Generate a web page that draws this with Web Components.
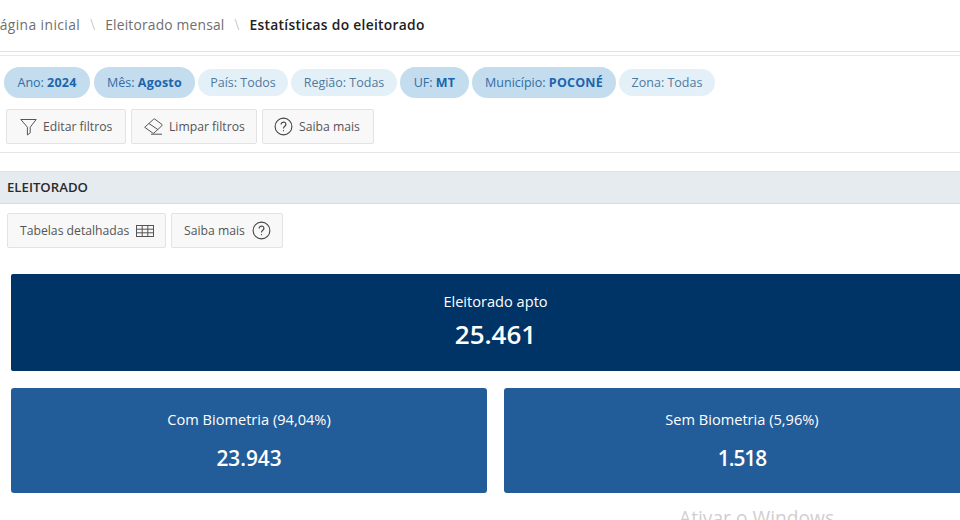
<!DOCTYPE html>
<html lang="pt-BR"><head><meta charset="utf-8"><title>Estatísticas do eleitorado</title>
<style>
html,body{margin:0;padding:0;background:#fff;overflow:hidden;width:960px;height:520px}
body{font-family:"Open Sans","Noto Sans",sans-serif}
app-page{width:1000px}
</style></head><body>
<template id="t-crumbs"><style>
:host{display:flex;align-items:center;height:51px;box-sizing:border-box;margin-left:-9px;padding-bottom:2px;font-size:13.8px;letter-spacing:.2px;color:#6f6f6f;white-space:nowrap}
.f{letter-spacing:.42px}
.s{margin:0 10px 0 10px;color:#b4b4b4;font-size:14px;font-weight:300}
b{font-weight:600;color:#212121;letter-spacing:.3px}
</style><span class="f">Página inicial</span><span class="s">\</span><span>Eleitorado mensal</span><span class="s">\</span><b>Estatísticas do eleitorado</b></template>

<template id="t-chip"><style>
:host{display:inline-flex;align-items:center;justify-content:center;height:27px;border-radius:14px;background:#e4f0f8;color:#4f7aa0;font-size:12.5px;white-space:nowrap;box-sizing:border-box;flex:none}
:host([on]){height:31px;border-radius:16px;background:#c3dcee;color:#2f6ea6}
::slotted(b){color:#1b66ad;font-weight:700;letter-spacing:.2px}
</style><slot></slot></template>

<template id="t-btn"><style>
:host{display:inline-flex;align-items:center;gap:var(--g,6px);height:35px;box-sizing:border-box;padding:0 var(--pr,13px) 0 var(--pl,13px);background:#f8f8f8;border:1px solid #e3e3e3;border-radius:2px;color:#555;font-size:12.2px;white-space:nowrap}
::slotted(svg){flex:none}
</style><slot></slot></template>

<template id="t-section"><style>
:host{display:flex;align-items:center;height:33px;box-sizing:border-box;padding:0 0 2px 7px;background:#e6ebf0;border-top:1px solid #dde2e7;border-bottom:1px solid #d6dbe0;color:#2a2a2a;font-size:13.2px;font-weight:600}
</style><slot></slot></template>

<template id="t-stat"><style>
:host{display:flex;flex-direction:column;align-items:center;box-sizing:border-box;border-radius:3px;background:#235d99;color:#fff;height:105px;padding-top:23px}
:host([dark]){background:#003366;height:97px;padding-top:19px;border-radius:2px}
.l{font-size:14.6px;line-height:16px}
.v{font-weight:600;font-size:20.8px;line-height:30px;margin-top:16px}
:host([dark]) .v{font-size:26px;line-height:34px;margin-top:8px}
</style><span class="l"><slot name="label"></slot></span><span class="v"><slot name="value"></slot></span></template>

<template id="t-page"><style>
:host{display:block}
.rule{border-top:1px solid #e2e2e2;border-bottom:1px solid #e8e8e8;height:3px}
.chips{display:flex;align-items:center;gap:3px;padding:11px 0 0 4px;height:31px}
.btns{display:flex;gap:5px;padding:11px 0 8px 6px;border-bottom:1px solid #e6e6e6}
.gap{height:18px}
.btns2{display:flex;gap:5px;padding:9px 0 0 7px}
.cards{display:flex;flex-direction:column;gap:17px;padding:26px 0 0 11px}
.row{display:grid;grid-template-columns:476px 476px;gap:17px}
</style>
<bread-crumbs></bread-crumbs><div class="rule"></div>
<div class="chips">
<filter-chip on style="width:86px;margin-right:1px">Ano:&nbsp;<b>2024</b></filter-chip><filter-chip on style="width:101px">Mês:&nbsp;<b>Agosto</b></filter-chip><filter-chip style="width:90px">País: Todos</filter-chip><filter-chip style="width:106px">Região: Todas</filter-chip><filter-chip on style="width:69px">UF:&nbsp;<b>MT</b></filter-chip><filter-chip on style="width:144px">Município:&nbsp;<b>POCONÉ</b></filter-chip><filter-chip style="width:96px">Zona: Todas</filter-chip>
</div>
<div class="btns">
<tool-btn style="--g:6px;width:120px"><svg width="17" height="18" viewBox="0 0 17 18" fill="none" stroke="#555" stroke-width="1"><path d="M.8 1.5h15.4L10.2 9.2v5.6L7.4 17V9.2z" stroke-linejoin="round"/></svg>Editar filtros</tool-btn>
<tool-btn style="width:126px;--pl:12px"><svg width="19" height="17" viewBox="0 0 19 17" fill="none" stroke="#555" stroke-width="1"><path d="M.7 9.3 9.6 1.2a1 1 0 0 1 1.3 0l7 5.2a.9.9 0 0 1 0 1.3l-7.9 7.3a1 1 0 0 1-1.3 0zM4.9 5.5l8.9 6M7 16.2h11" stroke-linejoin="round"/></svg>Limpar filtros</tool-btn>
<tool-btn style="--pl:11px;width:112px"><svg width="19" height="19" viewBox="0 0 19 19" fill="none" stroke="#444" stroke-width="1.1"><circle cx="9.5" cy="9.5" r="8.4"/><path d="M7.1 7.4a2.4 2.3 0 1 1 3.7 1.9c-.9.6-1.3 1-1.3 2.1" stroke-width="1.2"/><circle cx="9.5" cy="13.7" r=".6" fill="#444" stroke="none"/></svg>Saiba mais</tool-btn>
</div>
<div class="gap"></div>
<section-bar>ELEITORADO</section-bar>
<div class="btns2">
<tool-btn style="--g:7px;--pl:12px;width:159px">Tabelas detalhadas<svg width="18" height="12" viewBox="0 0 18 12" fill="none" stroke="#555" stroke-width="1"><rect x=".5" y=".5" width="17" height="11"/><path d="M.5 4.2h17M.5 7.8h17M6.2.5v11M11.8.5v11"/></svg></tool-btn>
<tool-btn style="--g:7px;--pl:12px;width:112px">Saiba mais<svg width="19" height="19" viewBox="0 0 19 19" fill="none" stroke="#444" stroke-width="1.1"><circle cx="9.5" cy="9.5" r="8.4"/><path d="M7.1 7.4a2.4 2.3 0 1 1 3.7 1.9c-.9.6-1.3 1-1.3 2.1" stroke-width="1.2"/><circle cx="9.5" cy="13.7" r=".6" fill="#444" stroke="none"/></svg></tool-btn>
</div>
<div class="cards">
<stat-card dark style="width:969px"><span slot="label">Eleitorado apto</span><span slot="value">25.461</span></stat-card>
<div class="row">
<stat-card><span slot="label">Com Biometria (94,04%)</span><span slot="value">23.943</span></stat-card>
<stat-card><span slot="label">Sem Biometria (5,96%)</span><span slot="value" style="letter-spacing:-1px">1.518</span></stat-card>
</div></div>
<win-mark>Ativar o Windows</win-mark>
</template>
<template id="t-win"><style>
:host{position:absolute;left:679px;top:505px;font-size:19.2px;color:#cfcfcf;line-height:26px;white-space:nowrap}
</style><slot></slot></template>
<app-page></app-page>
<script>
const reg=(n,id)=>customElements.define(n,class extends HTMLElement{constructor(){super();this.attachShadow({mode:"open"}).appendChild(document.getElementById(id).content.cloneNode(true))}});
reg("bread-crumbs","t-crumbs");reg("filter-chip","t-chip");reg("tool-btn","t-btn");reg("section-bar","t-section");reg("stat-card","t-stat");reg("win-mark","t-win");reg("app-page","t-page");
</script>
</body></html>
